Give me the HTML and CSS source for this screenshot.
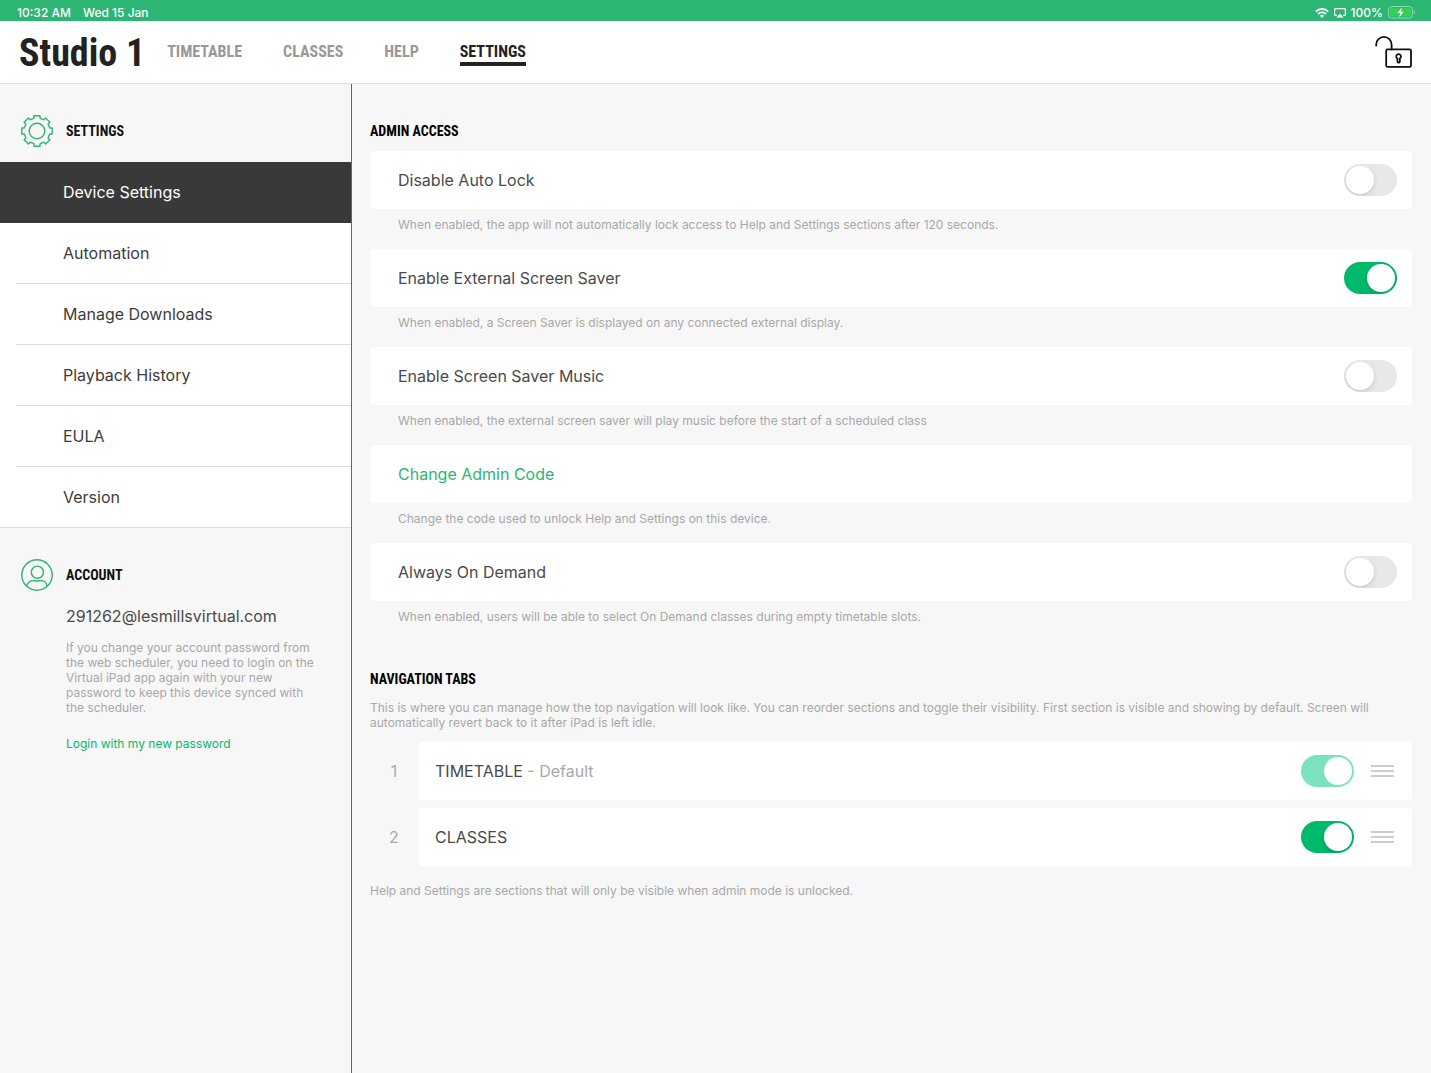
FILE: index.html
```html
<!DOCTYPE html>
<html lang="en">
<head>
    <meta charset="UTF-8">
    <meta name="viewport" content="width=device-width, initial-scale=1.0">
    <title>Studio 1 - Settings</title>
    <link rel="stylesheet" href="styles.css">
</head>
<body>
    <!-- Status bar -->
    <div class="status-bar">
        <div class="status-left">
            <span>10:32 AM</span>
            <span>Wed 15 Jan</span>
        </div>
        <div class="status-right">
            <svg class="wifi" width="14" height="10" viewBox="0 0 14 10" fill="none" stroke="#fff" stroke-width="1.9">
                <path d="M0.8 3.6a8.8 8.8 0 0 1 12.4 0"/>
                <path d="M3 6a5.7 5.7 0 0 1 8 0"/>
                <path d="M7 10L4.9 7.8a3 3 0 0 1 4.2 0z" fill="#fff" stroke="none"/>
            </svg>
            <svg class="airplay" width="12" height="10" viewBox="0 0 12 10">
                <path d="M3 7.4H1.6a1 1 0 0 1-1-1V1.6a1 1 0 0 1 1-1h8.8a1 1 0 0 1 1 1v4.8a1 1 0 0 1-1 1H9" fill="none" stroke="#fff" stroke-width="1.2"/>
                <path d="M6 5.4L9.6 9.6H2.4z" fill="#fff"/>
            </svg>
            <span>100%</span>
            <svg class="battery" width="28" height="13" viewBox="0 0 28 13">
                <rect x="0.5" y="0.5" width="24" height="11.6" rx="3.4" fill="none" stroke="#8fd9b4"/>
                <rect x="2" y="2" width="21" height="8.6" rx="2" fill="#30d158"/>
                <path d="M26 4.4c1.4.4 1.4 3.4 0 3.8z" fill="#8fd9b4"/>
                <path d="M14 1.6L9.4 6.9h2.8l-1 4.3 4.6-5.4h-2.8z" fill="#fff"/>
            </svg>
        </div>
    </div>

    <!-- Top navigation -->
    <header class="header">
        <h1 class="studio">Studio 1</h1>
        <nav class="tabs">
            <a href="#timetable">TIMETABLE</a>
            <a href="#classes">CLASSES</a>
            <a href="#help">HELP</a>
            <a href="#settings" class="active">SETTINGS</a>
        </nav>
        <button class="lock-btn" aria-label="Lock">
            <svg width="38" height="33" viewBox="0 0 38 33" fill="none" stroke="#111" stroke-width="1.8">
                <path d="M1.2 9.6V8.6a7.7 7.7 0 0 1 15.4 0V13.6" stroke-linecap="round"/>
                <rect x="11.2" y="13.4" width="24.8" height="17.4" rx="1.4"/>
                <path d="M22.4 22.6a2.4 2.4 0 1 1 2.4 0v2.8a1.2 1.2 0 0 1-2.4 0z"/>
            </svg>
        </button>
    </header>

    <div class="layout">
        <!-- Sidebar -->
        <aside class="sidebar">
            <div class="side-title">
                <svg width="32" height="32" viewBox="0 0 32 32" fill="none" stroke="#2db573" stroke-width="1.4">
                    <path d="M13 .8h6v2.4l3.8 1.6 1.8-1.8 4.3 4.3-1.8 1.8 1.6 3.9h2.5v6h-2.5l-1.6 3.9 1.8 1.8-4.3 4.3-1.8-1.8-3.8 1.6v2.4h-6v-2.4l-3.8-1.6L7.4 29l-4.3-4.3 1.8-1.8L3.3 19H.8v-6h2.5l1.6-3.9-1.8-1.8L7.4 3l1.8 1.8L13 3.2z" stroke-linejoin="round"/>
                    <circle cx="16" cy="16" r="7.8"/>
                </svg>
                <h2>SETTINGS</h2>
            </div>
            <nav class="side-menu">
                <a href="#device" class="selected">Device Settings</a>
                <a href="#automation">Automation</a>
                <a href="#downloads">Manage Downloads</a>
                <a href="#history">Playback History</a>
                <a href="#eula">EULA</a>
                <a href="#version">Version</a>
            </nav>
            <div class="side-title">
                <svg width="32" height="32" viewBox="0 0 32 32" fill="none" stroke="#2db573" stroke-width="1.4">
                    <circle cx="16" cy="16" r="15.2"/>
                    <circle cx="16.4" cy="13.2" r="6.1"/>
                    <path d="M5.8 26.8c1-3.5 3.1-5.2 6.1-5.2 1.8 0 2.6.4 4.3.4s2.5-.4 4.3-.4c3 0 4.9 1.7 5.7 5.2"/>
                </svg>
                <h2>ACCOUNT</h2>
            </div>
            <div class="account">
                <p class="email">291262@lesmillsvirtual.com</p>
                <p class="note">If you change your account password from the web scheduler, you need to login on the Virtual iPad app again with your new password to keep this device synced with the scheduler.</p>
                <a href="#login">Login with my new password</a>
            </div>
        </aside>

        <!-- Device settings -->
        <main class="content">
            <h2>ADMIN ACCESS</h2>
            <div class="card">
                <label for="autoLock">Disable Auto Lock</label>
                <input type="checkbox" class="toggle" id="autoLock">
            </div>
            <p class="hint">When enabled, the app will not automatically lock access to Help and Settings sections after 120 seconds.</p>
            <div class="card">
                <label for="screenSaver">Enable External Screen Saver</label>
                <input type="checkbox" class="toggle" id="screenSaver" checked>
            </div>
            <p class="hint">When enabled, a Screen Saver is displayed on any connected external display.</p>
            <div class="card">
                <label for="saverMusic">Enable Screen Saver Music</label>
                <input type="checkbox" class="toggle" id="saverMusic">
            </div>
            <p class="hint">When enabled, the external screen saver will play music before the start of a scheduled class</p>
            <div class="card">
                <button class="code-btn">Change Admin Code</button>
            </div>
            <p class="hint">Change the code used to unlock Help and Settings on this device.</p>
            <div class="card">
                <label for="onDemand">Always On Demand</label>
                <input type="checkbox" class="toggle" id="onDemand">
            </div>
            <p class="hint">When enabled, users will be able to select On Demand classes during empty timetable slots.</p>

            <h2 class="nav-title">NAVIGATION TABS</h2>
            <p class="note">This is where you can manage how the top navigation will look like. You can reorder sections and toggle their visibility. First section is visible and showing by default. Screen will automatically revert back to it after iPad is left idle.</p>
            <ol class="tab-list">
                <li>
                    <span class="number">1</span>
                    <div class="card">
                        <label for="tabTimetable">TIMETABLE <span class="default">- Default</span></label>
                        <input type="checkbox" class="toggle" id="tabTimetable" checked disabled>
                        <button class="drag" aria-label="Reorder Timetable"><i></i><i></i><i></i></button>
                    </div>
                </li>
                <li>
                    <span class="number">2</span>
                    <div class="card">
                        <label for="tabClasses">CLASSES</label>
                        <input type="checkbox" class="toggle" id="tabClasses" checked>
                        <button class="drag" aria-label="Reorder Classes"><i></i><i></i><i></i></button>
                    </div>
                </li>
            </ol>
            <p class="note">Help and Settings are sections that will only be visible when admin mode is unlocked.</p>
        </main>
    </div>
</body>
</html>
```
FILE: styles.css
```css
* {
    box-sizing: border-box;
}

body {
    display: flex;
    flex-direction: column;
    min-height: 100vh;
    margin: 0;
    background: #f7f7f7;
    font-family: Inter, 'Liberation Sans', sans-serif;
    font-size: 16px;
    color: #4a4a4a;
}

h1, h2, p, ol {
    margin: 0;
}

a {
    text-decoration: none;
}

button {
    padding: 0;
    border: none;
    background: none;
    font: inherit;
    cursor: pointer;
}

svg {
    display: block;
}

h1, h2, .tabs {
    font-family: 'Roboto Condensed', 'Liberation Sans Narrow', sans-serif;
    font-weight: bold;
}

h2 {
    font-size: 14px;
    line-height: 20px;
    color: #111;
}

/* Status bar */
.status-bar {
    display: flex;
    justify-content: space-between;
    height: 21px;
    padding: 4px 15px 0 17px;
    background: #2db573;
    color: #fff;
    font-size: 12px;
    font-weight: 500;
    line-height: 17px;
}

.status-left {
    display: flex;
    gap: 12px;
}

.status-right {
    display: flex;
    align-items: center;
    gap: 5px;
}

/* Header */
.header {
    display: flex;
    align-items: center;
    height: 63px;
    padding: 0 18px 0 19px;
    background: #fff;
    border-bottom: 1px solid #ddd;
}

.studio {
    padding-top: 2px;
    font-size: 38px;
    line-height: 48px;
    color: #222;
}

.tabs {
    display: flex;
    gap: 41px;
    margin-left: 22px;
    font-size: 16px;
    line-height: 20px;
}

.tabs a {
    padding-top: 4px;
    border-bottom: 4px solid transparent;
    color: #999;
}

.tabs .active {
    border-color: #222;
    color: #222;
}

.lock-btn {
    margin-left: auto;
}

/* Sidebar */
.layout {
    display: flex;
    flex: 1;
}

.sidebar {
    flex: 0 0 352px;
    border-right: 1px solid #666;
}

.side-title {
    display: flex;
    align-items: center;
    gap: 13px;
    height: 78px;
    padding: 16px 21px 0;
}

.side-menu {
    background: #fff;
    border-bottom: 1px solid #ddd;
}

.side-menu a {
    display: block;
    margin-left: 16px;
    padding-left: 47px;
    border-bottom: 1px solid #ddd;
    line-height: 60px;
    color: #3c3c3c;
}

.side-menu a:last-child {
    border-bottom: none;
}

.side-menu .selected {
    margin-left: 0;
    padding-left: 63px;
    background: #393939;
    border-color: #393939;
    color: #fff;
}

.account {
    padding: 0 31px 0 66px;
}

.email {
    line-height: 20px;
}

.note {
    font-size: 12px;
    line-height: 15px;
    color: #a8a8a8;
}

.account .note {
    margin: 14px 0 20px;
}

.account a {
    display: block;
    font-size: 12px;
    line-height: 18px;
    color: #00b96b;
}

/* Content */
.content {
    flex: 1;
    padding: 37px 19px 40px 18px;
}

.content h2 {
    color: #000;
}

.card {
    display: flex;
    align-items: center;
    height: 58px;
    padding: 0 15px 0 28px;
    background: #fff;
    border-radius: 4px;
}

.card label {
    flex: 1;
}

.content h2 + .card {
    margin-top: 10px;
}

.hint {
    padding: 7px 28px 15px;
    font-size: 12px;
    line-height: 18px;
    color: #a8a8a8;
}

.code-btn {
    color: #2db573;
}

.nav-title {
    margin: 28px 0 11px;
}

/* Toggle switch */
.toggle {
    display: flex;
    appearance: none;
    width: 53px;
    height: 32px;
    margin: 0;
    padding: 2px;
    border-radius: 16px;
    background: #e8e8e8;
    cursor: pointer;
    overflow: hidden;
}

.toggle::before {
    content: '';
    width: 28px;
    height: 28px;
    border-radius: 50%;
    background: #fff;
    box-shadow: 0 2px 5px rgba(0, 0, 0, 0.14);
}

.toggle:checked {
    justify-content: flex-end;
    background: #00b96b;
}

.toggle:disabled {
    background: #7be2c0;
}

.toggle:disabled::before {
    box-shadow: none;
}

/* Navigation tabs list */
.tab-list {
    display: grid;
    gap: 8px;
    margin: 12px 0 17px;
    padding: 0;
    list-style: none;
}

.tab-list li {
    display: flex;
    align-items: center;
}

.number {
    width: 48px;
    text-align: center;
    color: #a8a8a8;
}

.tab-list .card {
    flex: 1;
    padding: 0 18px 0 17px;
}

.default {
    color: #a8a8a8;
}

.drag {
    display: grid;
    gap: 3px;
    width: 23px;
    margin-left: 17px;
}

.drag i {
    height: 2px;
    background: #ccc;
}
```
